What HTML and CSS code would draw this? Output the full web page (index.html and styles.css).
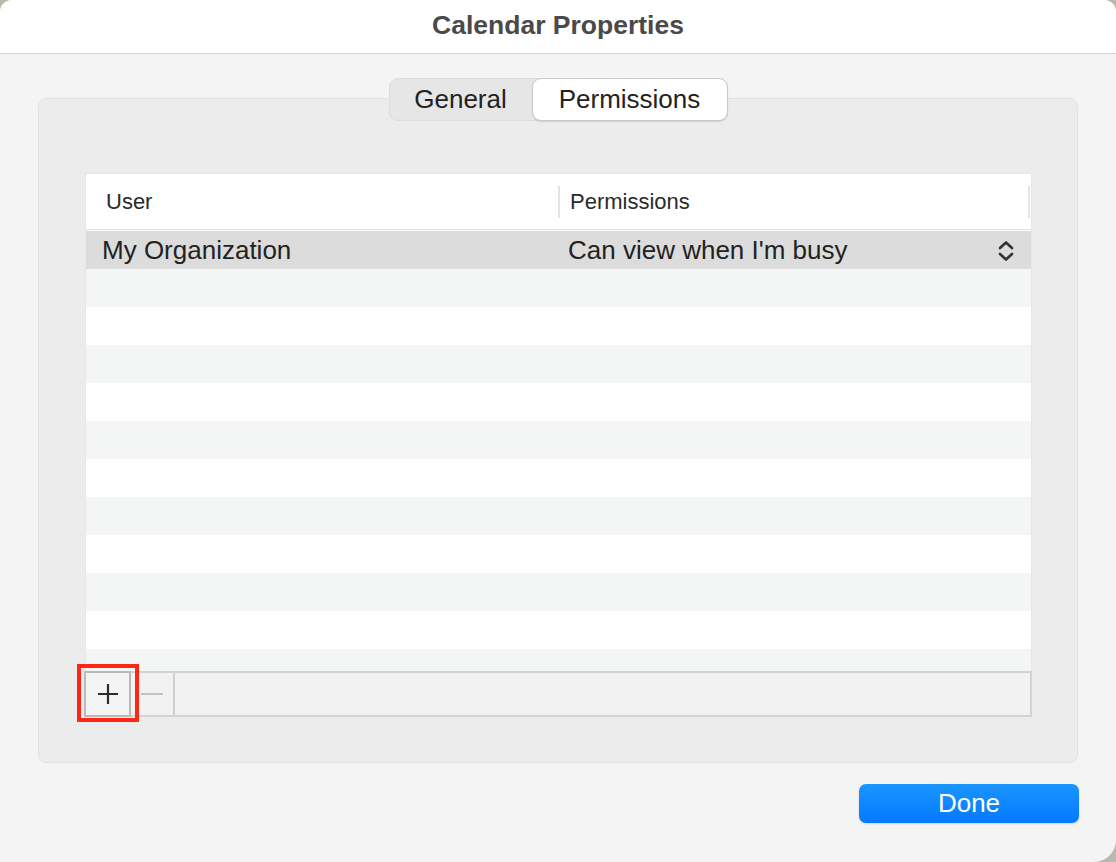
FILE: index.html
```html
<!DOCTYPE html>
<html>
<head>
  <title>Calendar Properties</title>
  <link rel="stylesheet" href="styles.css">
</head>
<body>
  <div class="window">
    <div class="titlebar">Calendar Properties</div>

    <div class="content">
      <div class="tabs">
        <div class="tab">General</div>
        <div class="tab active">Permissions</div>
      </div>

      <div class="group">
        <div class="table">
          <div class="thead">
            <div class="th col-user">User</div>
            <div class="th col-perm">Permissions</div>
          </div>
          <div class="row selected">
            <div class="cell col-user">My Organization</div>
            <div class="cell col-perm">
              <span>Can view when I'm busy</span>
              <svg class="stepper" width="18" height="24" viewBox="0 0 18 24">
                <path d="M3 9 L9 3.5 L15 9" fill="none" stroke="#333" stroke-width="2.6" stroke-linecap="round" stroke-linejoin="round"/>
                <path d="M3 15 L9 20.5 L15 15" fill="none" stroke="#333" stroke-width="2.6" stroke-linecap="round" stroke-linejoin="round"/>
              </svg>
            </div>
          </div>
          <div class="row odd"></div>
          <div class="row"></div>
          <div class="row odd"></div>
          <div class="row"></div>
          <div class="row odd"></div>
          <div class="row"></div>
          <div class="row odd"></div>
          <div class="row"></div>
          <div class="row odd"></div>
          <div class="row"></div>
          <div class="row odd"></div>
        </div>

        <div class="toolbar">
          <div class="tool-btn add">
            <svg width="24" height="24" viewBox="0 0 24 24">
              <path d="M12 2 V22 M2 12 H22" stroke="#2b2b2b" stroke-width="2.2"/>
            </svg>
          </div>
          <div class="tool-btn remove">
            <svg width="24" height="24" viewBox="0 0 24 24">
              <path d="M1 12 H23" stroke="#c2c2c2" stroke-width="2"/>
            </svg>
          </div>
          <div class="highlight"></div>
        </div>
      </div>

      <div class="footer">
        <button class="done">Done</button>
      </div>
    </div>
  </div>
</body>
</html>
```

FILE: styles.css
```css
html, body {
  margin: 0;
  height: 100%;
}
body {
  font-family: 'Liberation Sans', Arial, sans-serif;
  background-color: #b9b9ae;
  color: #222;
}
.window {
  width: 1116px;
  height: 862px;
  background-color: #f4f4f4;
  border-radius: 12px 12px 22px 0;
  overflow: hidden;
}
.titlebar {
  height: 53px;
  line-height: 50px;
  background-color: #fff;
  border-bottom: 1px solid #d6d6d6;
  text-align: center;
  font-size: 26.5px;
  font-weight: bold;
  color: #4a4a4a;
}
.content {
  padding: 24px 38px 0 38px;
}
.tabs {
  display: flex;
  width: 337px;
  height: 41px;
  margin: 0 auto -23px auto;
  background-color: #e6e6e6;
  border: 1px solid #dcdcdc;
  border-radius: 9px;
  position: relative;
  z-index: 1;
  font-size: 26px;
}
.tab {
  display: flex;
  align-items: center;
  justify-content: center;
  width: 142px;
  color: #222;
}
.tab.active {
  width: 194px;
  margin: -1px -1px -1px 0;
  background-color: #fff;
  border: 1px solid #c9c9c9;
  border-radius: 9px;
  box-shadow: 0 1px 1px rgba(0, 0, 0, 0.12);
}
.group {
  padding: 74px 45px 45px 46px;
  background-color: #ececec;
  border: 1px solid #e2e2e2;
  border-radius: 8px;
}
.table {
  height: 497px;
  overflow: hidden;
  background-color: #fff;
  border: 1px solid #e6e6e6;
  border-bottom: none;
}
.thead {
  display: flex;
  height: 55px;
  border-bottom: 1px solid #e2e2e2;
  align-items: center;
  font-size: 22px;
  color: #2a2a2a;
}
.th.col-user {
  width: 452px;
  padding-left: 20px;
}
.th.col-perm {
  flex: 1;
  padding-left: 10px;
  border-left: 2px solid #e4e4e4;
  border-right: 2px solid #e4e4e4;
  line-height: 32px;
  margin-right: 1px;
}
.row {
  display: flex;
  height: 38px;
  align-items: center;
  font-size: 26px;
}
.row.odd {
  background-color: #f4f5f5;
}
.row.selected {
  margin-top: 1px;
  background-color: #dcdcdc;
}
.cell.col-user {
  width: 456px;
  padding-left: 16px;
}
.cell.col-perm {
  flex: 1;
  display: flex;
  align-items: center;
  justify-content: space-between;
  padding-left: 10px;
  padding-right: 16px;
}
.stepper {
  margin-top: 2px;
}
.toolbar {
  display: flex;
  height: 42px;
  margin-left: -1px;
  background-color: #f2f2f2;
  border: 2px solid #d3d3d3;
  border-left: none;
  position: relative;
}
.tool-btn {
  display: flex;
  align-items: center;
  justify-content: center;
}
.tool-btn.add {
  width: 43px;
  margin: -2px 0;
  border: 2px solid #b9b9b9;
  background-color: #f4f4f4;
}
.tool-btn.remove {
  width: 42px;
  border-right: 2px solid #d0d0d0;
}
.highlight {
  position: absolute;
  left: -7px;
  top: -9px;
  width: 54px;
  height: 50px;
  border: 4px solid #ff2616;
}
.footer {
  display: flex;
  justify-content: flex-end;
  margin-top: 21px;
  margin-right: -1px;
}
.done {
  width: 220px;
  height: 39px;
  border: none;
  border-radius: 7px;
  background: linear-gradient(#1b95ff, #0479fe);
  color: #fff;
  font-family: 'Liberation Sans', Arial, sans-serif;
  font-size: 26px;
  padding: 0;
  box-shadow: 0 1px 2px rgba(0, 0, 0, 0.15);
}
```
